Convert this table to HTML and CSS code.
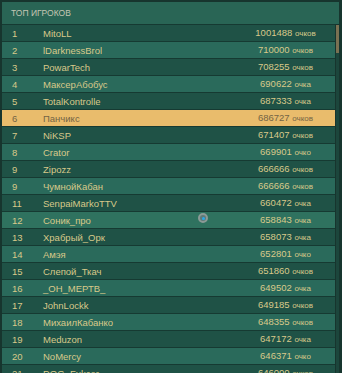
FILE: index.html
```html
<!DOCTYPE html>
<html lang="ru">
<head>
<meta charset="utf-8">
<title>Топ игроков</title>
<link rel="stylesheet" href="styles.css">
</head>
<body>
<div class="panel">
  <div class="header">ТОП ИГРОКОВ</div>
  <div class="body">
    <div class="list">
      <div class="row odd"><span class="num">1</span><span class="name">MitoLL</span><span class="score">1001488 <small>очков</small></span></div>
      <div class="row even"><span class="num">2</span><span class="name">lDarknessBrol</span><span class="score">710000 <small>очков</small></span></div>
      <div class="row odd"><span class="num">3</span><span class="name">PowarTech</span><span class="score">708255 <small>очков</small></span></div>
      <div class="row even"><span class="num">4</span><span class="name">МаксерАбобус</span><span class="score">690622 <small>очка</small></span></div>
      <div class="row odd"><span class="num">5</span><span class="name">TotalKontrolle</span><span class="score">687333 <small>очка</small></span></div>
      <div class="row me"><span class="num">6</span><span class="name">Панчикс</span><span class="score">686727 <small>очков</small></span></div>
      <div class="row odd"><span class="num">7</span><span class="name">NiKSP</span><span class="score">671407 <small>очков</small></span></div>
      <div class="row even"><span class="num">8</span><span class="name">Crator</span><span class="score">669901 <small>очко</small></span></div>
      <div class="row odd"><span class="num">9</span><span class="name">Zipozz</span><span class="score">666666 <small>очков</small></span></div>
      <div class="row even"><span class="num">9</span><span class="name">ЧумнойКабан</span><span class="score">666666 <small>очков</small></span></div>
      <div class="row odd"><span class="num">11</span><span class="name">SenpaiMarkoTTV</span><span class="score">660472 <small>очка</small></span></div>
      <div class="row even hover"><span class="num">12</span><span class="name">Соник_про</span><span class="score">658843 <small>очка</small></span></div>
      <div class="row odd"><span class="num">13</span><span class="name">Храбрый_Орк</span><span class="score">658073 <small>очка</small></span></div>
      <div class="row even"><span class="num">14</span><span class="name">Амэя</span><span class="score">652801 <small>очко</small></span></div>
      <div class="row odd"><span class="num">15</span><span class="name">Слепой_Ткач</span><span class="score">651860 <small>очков</small></span></div>
      <div class="row even"><span class="num">16</span><span class="name">_ОН_МЕРТВ_</span><span class="score">649502 <small>очка</small></span></div>
      <div class="row odd"><span class="num">17</span><span class="name">JohnLockk</span><span class="score">649185 <small>очков</small></span></div>
      <div class="row even"><span class="num">18</span><span class="name">МихаилКабанко</span><span class="score">648355 <small>очков</small></span></div>
      <div class="row odd"><span class="num">19</span><span class="name">Meduzon</span><span class="score">647172 <small>очка</small></span></div>
      <div class="row even"><span class="num">20</span><span class="name">NoMercy</span><span class="score">646371 <small>очко</small></span></div>
      <div class="row odd"><span class="num">21</span><span class="name">DOG_Fukcer</span><span class="score">646000 <small>очков</small></span></div>
    </div>
    <div class="scrollbar"><div class="thumb"></div></div>
  </div>
  <div class="cursor"></div>
</div>
</body>
</html>
```

FILE: styles.css
```css
* { box-sizing: border-box; }
html, body {
  margin: 0;
  padding: 0;
  background: #17332c;
}
.panel {
  position: relative;
  width: 342px;
  height: 373px;
  overflow: hidden;
  background: #17352e;
  padding: 2px 3px 0 2px;
  font-family: "Liberation Sans", Arial, sans-serif;
}
.header {
  height: 22px;
  line-height: 22px;
  background: #296555;
  color: #c4c6b3;
  font-size: 8.5px;
  padding-left: 9px;
}
.body {
  display: flex;
  gap: 1px;
}
.list {
  width: 333px;
  display: flex;
  flex-direction: column;
}
.row {
  display: grid;
  grid-template-columns: 41px 1fr 99px;
  height: 17px;
  border-top: 1px solid #163a32;
  align-items: center;
  color: #d8c98a;
  font-size: 9.5px;
  line-height: 16px;
}
.row.odd { background: #1f5246; }
.row.even { background: #2a6a5b; }
.row.hover { background: #2f725f; }
.row.me { background: #e9bc6c; color: #736445; }
.num { padding-left: 10px; }
.score { text-align: center; }
.score small { font-size: 8px; }
.scrollbar {
  width: 3px;
  margin-top: 1px;
  height: 400px;
  background: #1c463c;
}
.thumb {
  height: 28px;
  background: #7a7152;
}
.cursor {
  position: absolute;
  left: 198px;
  top: 213px;
  width: 10px;
  height: 10px;
  border-radius: 50%;
  border: 2px solid #8b9a96;
  background: #5d7a78;
  display: flex;
  align-items: center;
  justify-content: center;
}
.cursor::after {
  content: "";
  width: 3px;
  height: 3px;
  border-radius: 50%;
  background: #28a8e8;
}
```
